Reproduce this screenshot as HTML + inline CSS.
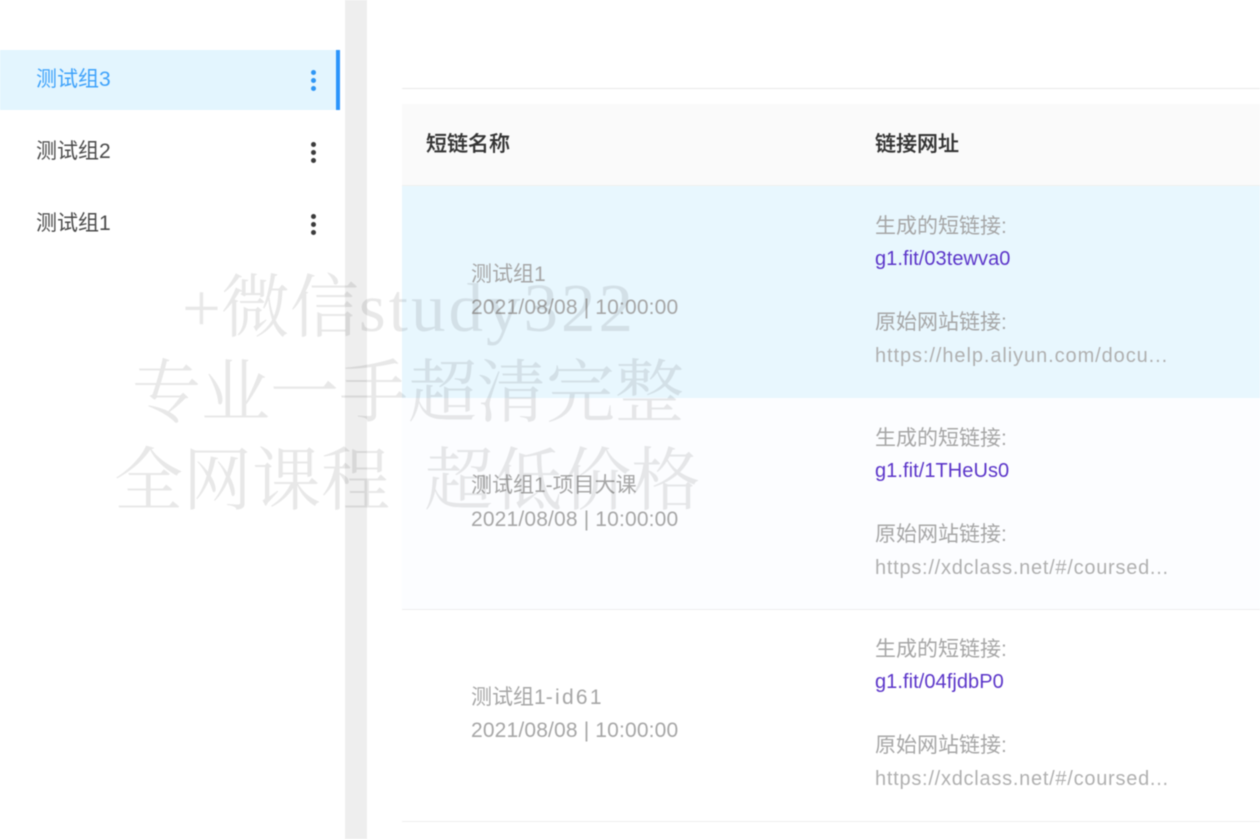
<!DOCTYPE html>
<html lang="zh"><head><meta charset="utf-8"><style>
*{box-sizing:border-box}
html,body{margin:0;padding:0;width:1260px;height:839px;overflow:hidden;background:#fff}
body{position:relative;font-family:"Liberation Sans","Noto Sans CJK SC",sans-serif}
.a{position:absolute;white-space:nowrap}
.blur{position:absolute;left:0;top:0;width:1260px;height:839px;filter:blur(.45px)}
.t{font-size:21px;line-height:28px;color:#4a4a4a}
.h{font-size:21px;line-height:28px;color:#333;font-weight:500;-webkit-text-stroke:.2px #333}
.g{font-size:21px;line-height:28px;color:#a6a6a6}
.dt{letter-spacing:.16px}
.u{font-size:20px;color:#b0b0b0;letter-spacing:.92px}
.l{font-size:20px;line-height:28px;color:#5b35c9;letter-spacing:.06px}
.d{position:absolute;width:5px;height:5px;border-radius:50%;background:#3c3c3c}
.b .d{background:#2f96f5}
.w{position:absolute;font-family:"Liberation Serif","Noto Serif CJK SC",serif;font-size:69px;line-height:80px;color:rgba(0,0,0,.09);white-space:pre}
</style></head><body><div class="blur">
<div class="a" style="left:0;top:50px;width:340px;height:60px;background:#e3f5fe"></div>
<div class="a" style="left:336px;top:50px;width:4px;height:60px;background:#2a94fb"></div>
<div class="a" style="left:345px;top:0;width:22px;height:839px;background:#eee"></div>
<div class="a" style="left:402px;top:88px;width:858px;height:1px;background:#eaeaea"></div>
<div class="a" style="left:402px;top:104px;width:858px;height:81px;background:#fafafa"></div>
<div class="a" style="left:402px;top:185px;width:858px;height:1px;background:#f0f0f0"></div>
<div class="a" style="left:402px;top:186px;width:858px;height:212px;background:#e8f7fe"></div>
<div class="a" style="left:402px;top:398px;width:858px;height:211px;background:#fcfdff"></div>
<div class="a" style="left:402px;top:609px;width:858px;height:1px;background:#eeeeee"></div>
<div class="a" style="left:402px;top:821px;width:858px;height:1px;background:#eeeeee"></div>

<div class="a t" style="left:36px;top:66px;color:#3ea2fb">测试组3</div>
<div class="a t" style="left:36px;top:138px">测试组2</div>
<div class="a t" style="left:36px;top:210px">测试组1</div>
<div class="b"><i class="d" style="left:311px;top:70px"></i><i class="d" style="left:311px;top:78px"></i><i class="d" style="left:311px;top:86px"></i></div>
<i class="d" style="left:311px;top:142px"></i><i class="d" style="left:311px;top:150px"></i><i class="d" style="left:311px;top:158px"></i>
<i class="d" style="left:311px;top:214px"></i><i class="d" style="left:311px;top:222px"></i><i class="d" style="left:311px;top:230px"></i>

<div class="a h" style="left:426px;top:131px">短链名称</div>
<div class="a h" style="left:875px;top:131px">链接网址</div>

<div class="a g" style="left:471px;top:261px">测试组1</div>
<div class="a g dt" style="left:471px;top:294px">2021/08/08 | 10:00:00</div>
<div class="a g" style="left:875px;top:213px">生成的短链接:</div>
<div class="a l" style="left:875px;top:245px">g1.fit/03tewva0</div>
<div class="a g" style="left:875px;top:309px">原始网站链接:</div>
<div class="a g u" style="left:875px;top:342px">https://help.aliyun.com/docu...</div>

<div class="a g" style="left:471px;top:472px">测试组1-项目大课</div>
<div class="a g dt" style="left:471px;top:506px">2021/08/08 | 10:00:00</div>
<div class="a g" style="left:875px;top:425px">生成的短链接:</div>
<div class="a l" style="left:875px;top:457px">g1.fit/1THeUs0</div>
<div class="a g" style="left:875px;top:521px">原始网站链接:</div>
<div class="a g u" style="left:875px;top:554px;letter-spacing:.74px">https://xdclass.net/#/coursed...</div>

<div class="a g" style="left:471px;top:684px">测试组1<span style="letter-spacing:2.3px">-id61</span></div>
<div class="a g dt" style="left:471px;top:717px">2021/08/08 | 10:00:00</div>
<div class="a g" style="left:875px;top:636px">生成的短链接:</div>
<div class="a l" style="left:875px;top:668px">g1.fit/04fjdbP0</div>
<div class="a g" style="left:875px;top:732px">原始网站链接:</div>
<div class="a g u" style="left:875px;top:765px;letter-spacing:.74px">https://xdclass.net/#/coursed...</div>

<div class="w" style="left:182px;top:268px">+微信<span style="letter-spacing:3px">study322</span></div>
<div class="w" style="left:132px;top:353px">专业一手超清完整</div>
<div class="w" style="left:114px;top:441px;word-spacing:17px">全网课程 超低价格</div>
</div></body></html>
